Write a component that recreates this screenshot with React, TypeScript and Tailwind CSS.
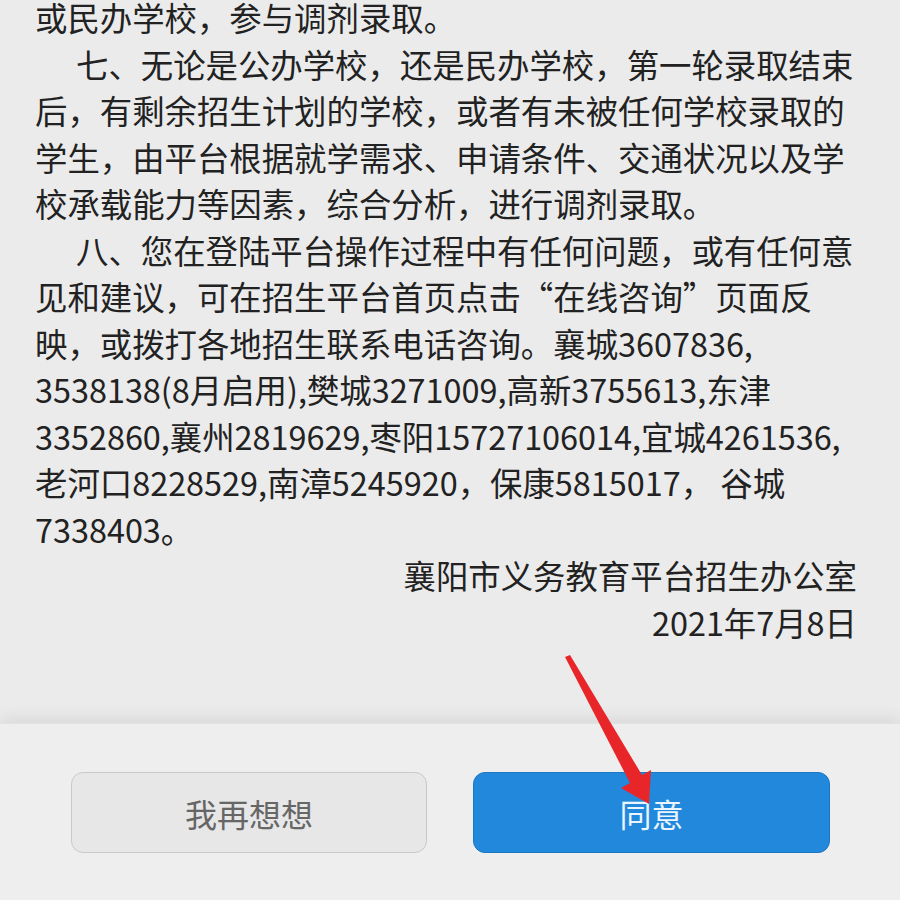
import React from "react";

const font = { fontFamily: '"Noto Sans CJK SC", "Noto Sans", sans-serif' };

export default function App() {
  return (
    <div
      className="relative w-[900px] h-[900px] overflow-hidden bg-[#ebebeb] flex flex-col"
      style={font}
    >
      <div className="flex-1 overflow-hidden pl-[35px] pr-[43px] text-[32.4px] leading-[46.5px] text-[#222222]">
        <div className="-mt-[6px]">
          <p className="whitespace-nowrap">或民办学校，参与调剂录取。</p>
          <p className="whitespace-nowrap indent-[41px]">
            七、无论是公办学校，还是民办学校，第一轮录取结束
            <br />
            后，有剩余招生计划的学校，或者有未被任何学校录取的
            <br />
            学生，由平台根据就学需求、申请条件、交通状况以及学
            <br />
            校承载能力等因素，综合分析，进行调剂录取。
          </p>
          <p className="whitespace-nowrap indent-[41px]">
            八、您在登陆平台操作过程中有任何问题，或有任何意
            <br />
            见和建议，可在招生平台首页点击“在线咨询”页面反
            <br />
            映，或拨打各地招生联系电话咨询。襄城3607836,
            <br />
            3538138(8月启用),樊城3271009,高新3755613,东津
            <br />
            3352860,襄州2819629,枣阳15727106014,宜城4261536,
            <br />
            老河口8228529,南漳5245920，保康5815017，&nbsp;谷城
            <br />
            7338403。
          </p>
          <p className="text-right">襄阳市义务教育平台招生办公室</p>
          <p className="text-right">2021年7月8日</p>
        </div>
      </div>
      <div className="h-[177px] shrink-0 bg-[#eeeeee] shadow-[0_-6px_14px_rgba(0,0,0,0.07)] border-t border-[#e2e2e2] flex items-start gap-[46px] pl-[71px] pr-[70px] pt-[48px]">
        <button className="w-[356px] h-[81px] rounded-[12px] border border-[#c9c9c9] bg-[#e7e7e7] text-[32px] text-[#666666]" style={font}>
          我再想想
        </button>
        <button className="w-[357px] h-[81px] rounded-[12px] border border-[#1b77c2] bg-[#2288dc] text-[32px] text-[#eaf5ff]" style={font}>
          同意
        </button>
      </div>
      <svg className="absolute left-0 top-0 pointer-events-none" width="900" height="900" viewBox="0 0 900 900">
        <polygon
          points="565,657 570,655 642,775 651,770 649,804 621,788 630,783"
          fill="#e8262a"
        />
      </svg>
    </div>
  );
}
